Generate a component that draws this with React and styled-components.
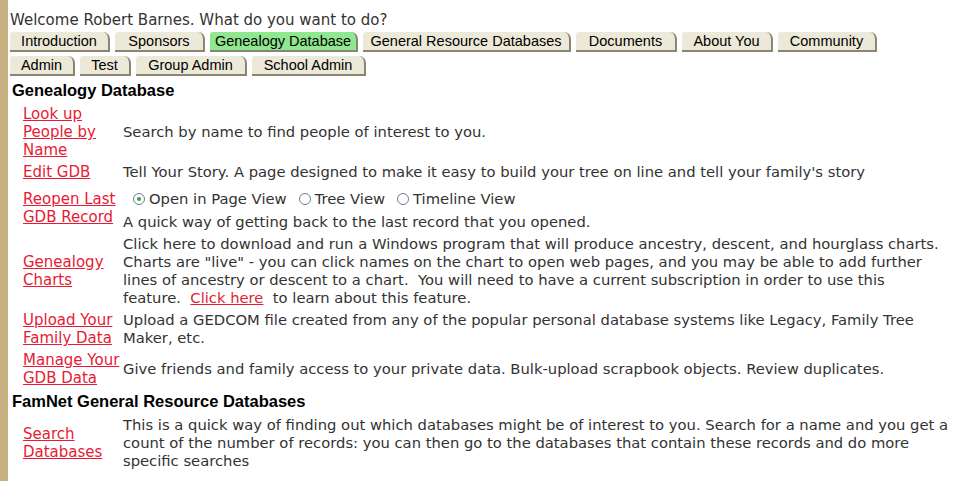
import React from 'react'
import styled, { createGlobalStyle } from 'styled-components'

const GlobalStyle = createGlobalStyle`
  html, body { margin: 0; padding: 0; background: #fff; }
  body { font-family: "DejaVu Sans", Verdana, sans-serif; }
`

const tabs1 = [
  { label: 'Introduction', w: 100 },
  { label: 'Sponsors', w: 90 },
  { label: 'Genealogy Database', w: 148, active: true },
  { label: 'General Resource Databases', w: 208 },
  { label: 'Documents', w: 101 },
  { label: 'About You', w: 91 },
  { label: 'Community', w: 99 },
]
const tabs2 = [
  { label: 'Admin', w: 65 },
  { label: 'Test', w: 51 },
  { label: 'Group Admin', w: 111 },
  { label: 'School Admin', w: 114 },
]

export default function App() {
  return (
    <Page>
      <GlobalStyle />
      <Welcome>Welcome Robert Barnes. What do you want to do?</Welcome>
      <TabBar>
        <TabRow>
          {tabs1.map((t) => (
            <Tab key={t.label} $w={t.w} $active={t.active}>{t.label}</Tab>
          ))}
        </TabRow>
        <TabRow>
          {tabs2.map((t) => (
            <Tab key={t.label} $w={t.w}>{t.label}</Tab>
          ))}
        </TabRow>
      </TabBar>

      <Heading>Genealogy Database</Heading>
      <Table $desc={826}>
        <LinkCell><A>Look up People by Name</A></LinkCell>
        <Desc>Search by name to find people of interest to you.</Desc>

        <LinkCell><A>Edit GDB</A></LinkCell>
        <Desc>Tell Your Story. A page designed to make it easy to build your tree on line and tell your family's story</Desc>

        <LinkCell><A>Reopen Last GDB Record</A></LinkCell>
        <Desc>
          <Radios>
            <Radio><Dot $checked />Open in Page View</Radio>
            <Radio><Dot />Tree View</Radio>
            <Radio><Dot />Timeline View</Radio>
          </Radios>
          A quick way of getting back to the last record that you opened.
        </Desc>

        <LinkCell><A>Genealogy Charts</A></LinkCell>
        <Desc>
          Click here to download and run a Windows program that will produce ancestry, descent, and hourglass charts.
          Charts are "live" - you can click names on the chart to open web pages, and you may be able to add further
          lines of ancestry or descent to a chart.&nbsp; You will need to have a current subscription in order to use this
          feature.&nbsp; <A>Click here</A>&nbsp; to learn about this feature.
        </Desc>

        <LinkCell><A>Upload Your Family Data</A></LinkCell>
        <Desc>Upload a GEDCOM file created from any of the popular personal database systems like Legacy, Family Tree Maker, etc.</Desc>

        <LinkCell><A>Manage Your GDB Data</A></LinkCell>
        <Desc>Give friends and family access to your private data. Bulk-upload scrapbook objects. Review duplicates.</Desc>
      </Table>

      <Heading>FamNet General Resource Databases</Heading>
      <Table $desc={836}>
        <LinkCell><A>Search Databases</A></LinkCell>
        <Desc>
          This is a quick way of finding out which databases might be of interest to you. Search for a name and you get a
          count of the number of records: you can then go to the databases that contain these records and do more
          specific searches
        </Desc>
      </Table>
    </Page>
  )
}

const Page = styled.div`
  min-height: 481px;
  box-sizing: border-box;
  border-left: 8px solid #c8b183;
  padding: 11px 0 0 2px;
`

const Welcome = styled.div`
  font-size: 15px;
  line-height: 19px;
  color: #333;
  margin-bottom: 2px;
`

const TabBar = styled.div`
  display: flex;
  flex-direction: column;
  gap: 4px;
`

const TabRow = styled.div`
  display: flex;
  gap: 5px;
`

const Tab = styled.span`
  display: inline-block;
  box-sizing: border-box;
  width: ${(p) => p.$w}px;
  text-align: center;
  font-family: "Liberation Sans", Arial, sans-serif;
  font-size: 14.5px;
  line-height: 18px;
  color: #000;
  background: ${(p) => (p.$active ? '#8fe78f' : '#ece9d8')};
  border-top-left-radius: 3px;
  border-top-right-radius: 7px;
  border-right: 2px solid #8a8471;
  border-bottom: 2px solid #8a8471;
`

const Heading = styled.div`
  font-family: "Liberation Sans", Arial, sans-serif;
  font-weight: bold;
  font-size: 16.5px;
  line-height: 18px;
  color: #000;
  padding: 5px 0 6px 2px;
`

const Table = styled.div`
  display: grid;
  grid-template-columns: 100px ${(p) => p.$desc}px;
  row-gap: 4px;
  padding-left: 13px;
`

const LinkCell = styled.div`
  display: flex;
  align-items: center;
  font-size: 15px;
  line-height: 18px;
`

const A = styled.a`
  color: #e81a34;
  text-decoration: underline;
  cursor: pointer;
`

const Desc = styled.div`
  align-self: center;
  font-size: 14.75px;
  line-height: 18px;
  color: #333;
`

const Radios = styled.div`
  display: flex;
  align-items: center;
  height: 22px;
  margin: 3px 0 3px 10px;
`

const Radio = styled.label`
  display: inline-flex;
  align-items: center;
  margin-right: 12px;
`

const Dot = styled.span`
  width: 12px;
  height: 12px;
  border-radius: 50%;
  border: 1px solid #6b7e93;
  background: #fff;
  margin-right: 4px;
  box-sizing: border-box;
  position: relative;
  &::after {
    content: '';
    display: ${(p) => (p.$checked ? 'block' : 'none')};
    position: absolute;
    left: 3px;
    top: 3px;
    width: 4px;
    height: 4px;
    border-radius: 50%;
    background: #2fa53c;
  }
`
